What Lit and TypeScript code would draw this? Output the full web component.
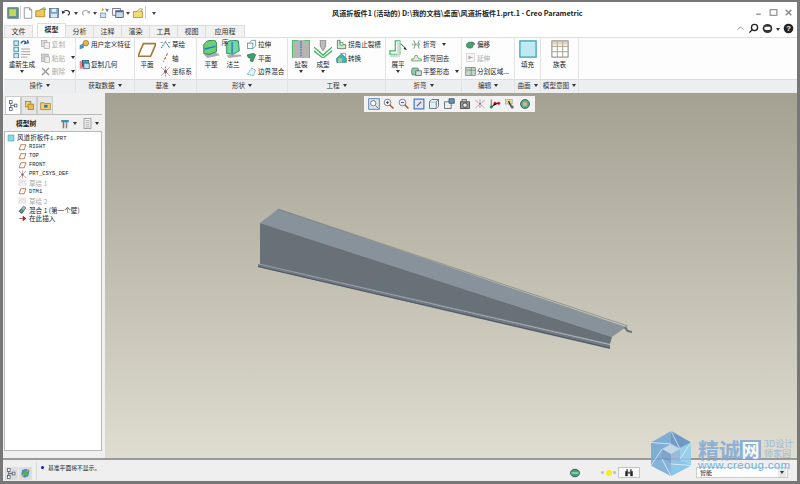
import { LitElement, css, html, svg } from 'lit';
import { customElement } from 'lit/decorators.js';

// small icon set, all drawn on a 16x16 box
const ic = (body: unknown, size = 14) =>
    html`<svg width="${size}" height="${size}" viewBox="0 0 16 16">${body}</svg>`;

const icons: Record<string, unknown> = {
    app: svg`<rect x="1" y="1" width="14" height="14" fill="#5f9a86" stroke="#4d6d80"/><rect x="3" y="3" width="9" height="9" fill="#c9d65a"/>`,
    page: svg`<path d="M3 1h7l3 3v11H3z" fill="#fff" stroke="#777"/><path d="M10 1v3h3" fill="none" stroke="#777"/>`,
    open: svg`<path d="M1 5h5l1-2h6v10H1z" fill="#eec75c" stroke="#9a7a25"/><path d="M9 2l4-1 1 3" fill="none" stroke="#4a8a3a"/>`,
    save: svg`<rect x="2" y="2" width="12" height="12" fill="#7da3c6" stroke="#456a8c"/><rect x="5" y="2.500" width="6" height="4" fill="#e8eef4"/><rect x="4" y="9" width="8" height="5" fill="#dfe6ec"/>`,
    undo: svg`<path d="M3 8a5 4 0 0 1 9-1 4 4 0 0 1-2 5" fill="none" stroke="#333" stroke-width="1.600"/><path d="M1 5l1 5 4-2z" fill="#333"/>`,
    redo: svg`<path d="M13 8a5 4 0 0 0-9-1 4 4 0 0 0 2 5" fill="none" stroke="#aaa" stroke-width="1.600"/><path d="M15 5l-1 5-4-2z" fill="#aaa"/>`,
    regen: svg`<rect x="2" y="8" width="7" height="6" fill="#cfe2ee" stroke="#6f8fa5"/><path d="M8 2l5 1-2 4z" fill="#3d7fc2"/><path d="M5 1l2 3-4 2z" fill="#e0a030"/>`,
    win: svg`<rect x="1" y="2" width="10" height="9" fill="#fff" stroke="#556"/><rect x="5" y="5" width="10" height="9" fill="#cbd9e8" stroke="#446"/><rect x="5" y="5" width="10" height="2" fill="#3c6ea5"/>`,
    closeWin: svg`<path d="M2 6h12v8H2z" fill="#f0dc70" stroke="#a08a30"/><path d="M6 6l5-4 3 1-3 3" fill="#f8f0b0" stroke="#a08a30"/>`,
    copy: svg`<rect x="2" y="2" width="8" height="9" fill="#ddd" stroke="#aaa"/><rect x="6" y="5" width="8" height="9" fill="#eee" stroke="#aaa"/>`,
    paste: svg`<rect x="2" y="3" width="10" height="11" fill="#ccc" stroke="#aaa"/><rect x="7" y="7" width="7" height="8" fill="#eee" stroke="#aaa"/>`,
    del: svg`<path d="M3 3l10 10M13 3L3 13" stroke="#999" stroke-width="2"/>`,
    udf: svg`<circle cx="10" cy="6" r="4" fill="#e8b93c" stroke="#8a6a20"/><path d="M1 9l6-3v7l-6 2z" fill="#4a90c8"/>`,
    geom: svg`<rect x="1" y="3" width="6" height="11" fill="#e44" opacity=".7"/><rect x="5" y="2" width="9" height="8" fill="#35a7c9" stroke="#246"/><path d="M7 6h8v8H7z" fill="#bfe3ee" stroke="#246"/>`,
    sketch: svg`<path d="M2 13L8 4l6 9" fill="none" stroke="#3a6ea8" stroke-width="1.500" stroke-dasharray="2 1"/><path d="M1 5h3M12 5h3" stroke="#555"/>`,
    axis: svg`<path d="M11 2L5 14" stroke="#9a5a28" stroke-width="1.500" stroke-dasharray="4 2"/>`,
    csys: svg`<path d="M2 2l12 12M14 2L2 14M8 1v14" stroke="#a55" stroke-width="1.200" stroke-dasharray="2 1"/><circle cx="8" cy="8" r="2" fill="#555"/>`,
    extrude: svg`<rect x="2" y="6" width="8" height="8" fill="#fff" stroke="#3a7fa8"/><path d="M5 6l3-4h6v8l-4 4" fill="none" stroke="#3a7fa8"/>`,
    flat: svg`<path d="M2 4l9-2 3 2-2 5-2 5-4-1 1-4-4-1z" fill="#3fa06a" stroke="#1f6a45"/>`,
    blend: svg`<path d="M2 12l6-9 6 3-3 8z" fill="#dff1f6" stroke="#3a8fb0" stroke-dasharray="2 1"/>`,
    corner: svg`<path d="M2 2h4v6h8v6H2z" fill="#cfe8c8" stroke="#555"/><rect x="6" y="5" width="4" height="4" fill="#fff" stroke="#3a9a4a"/>`,
    convert: svg`<path d="M1 9l7-6 7 6v6H1z" fill="#46b0b8" stroke="#276"/><path d="M6 2h8v6" fill="none" stroke="#a5a"/><rect x="3" y="9" width="6" height="6" fill="#8ed0a0"/>`,
    bend: svg`<path d="M2 8h12" stroke="#3a9a4a" stroke-width="3" stroke-dasharray="1 1"/><path d="M4 2l2 5M12 2l-2 5M4 14l2-5M12 14l-2-5" stroke="#555"/>`,
    unbend: svg`<path d="M1 13h14v-3h-4L9 5H6l-2 5H1z" fill="#e0f0dc" stroke="#4a8a50"/>`,
    state: svg`<rect x="1" y="3" width="10" height="10" rx="2" fill="#8fcca8" stroke="#3a7a5a"/><rect x="7" y="7" width="8" height="7" fill="#cdd" stroke="#555"/>`,
    offset: svg`<path d="M2 9c0-5 11-6 12-2 0 2-2 2-3 2v3c-3 2-9 2-9-3z" fill="#4fa070" stroke="#2a6a4a"/>`,
    extend: svg`<rect x="2" y="2" width="12" height="12" fill="#f4f4f4" stroke="#ccc"/><path d="M7 8h4" stroke="#888"/><rect x="5" y="6" width="3" height="4" fill="#aaa"/>`,
    split: svg`<rect x="1" y="2" width="14" height="12" fill="#cfcfcf" stroke="#3a9a4a"/><path d="M1 6h14M9 2v12" stroke="#3a9a4a"/>`,
    tree: svg`<rect x="2" y="1" width="4" height="4" fill="#fff" stroke="#345"/><rect x="9" y="6" width="4" height="4" fill="#fff" stroke="#345"/><rect x="2" y="11" width="4" height="4" fill="#fff" stroke="#345"/><path d="M4 5v6M4 8h5" stroke="#345"/>`,
    layers: svg`<rect x="2" y="2" width="8" height="8" fill="#f0d268" stroke="#8a7530"/><rect x="6" y="6" width="8" height="8" fill="#e8be4c" stroke="#8a7530"/>`,
    folder: svg`<path d="M1 4h5l1 1h8v9H1z" fill="#f3d264" stroke="#8a7530"/><rect x="6" y="7" width="5" height="4" fill="#3a72b5"/>`,
    tools: svg`<path d="M3 4h10v3H3z" fill="#3a8fb5"/><rect x="5" y="6" width="2" height="9" fill="#b5643a"/><rect x="9" y="6" width="2" height="9" fill="#7a8a9a"/>`,
    list: svg`<rect x="3" y="1" width="10" height="14" fill="#fff" stroke="#777"/><path d="M5 4h6M5 7h6M5 10h6M5 13h6" stroke="#777"/>`,
    part: svg`<rect x="2" y="2" width="12" height="12" fill="#7fdfe0" stroke="#3a8a9a"/>`,
    datum: svg`<path d="M5 3h9l-3 9H2z" fill="#fff" stroke="#a5562a" stroke-width="1.300"/>`,
    sketchGrey: svg`<path d="M2 13c0-10 12-10 12 0" fill="none" stroke="#bbb"/><rect x="1" y="2" width="14" height="12" fill="#ddd" opacity=".5"/>`,
    blendFeat: svg`<path d="M2 11L10 2l4 3-7 10z" fill="#8fc7a8" stroke="#346"/><circle cx="6" cy="11" r="3" fill="#6aa5d0" stroke="#234"/>`,
    insert: svg`<path d="M2 8h7V4l5 4-5 4V8" fill="#e01010" stroke="#900"/>`,
    model: svg`<path d="M3 3l6-2 5 3-2 8-6 2-4-4z" fill="#3f8fc0"/><path d="M3 12L13 2" stroke="#e8a030" stroke-width="2"/><circle cx="8" cy="8" r="3" fill="#5ab04a"/>`,
    sync: svg`<ellipse cx="8" cy="8" rx="6" ry="5" fill="#3fa86a" stroke="#236"/><path d="M3 8h10" stroke="#fff"/>`,
    search: svg`<circle cx="9.500" cy="6.500" r="4.500" fill="none" stroke="#222" stroke-width="2"/><path d="M6 10l-4 4" stroke="#222" stroke-width="2"/>`,
    chat: svg`<ellipse cx="8" cy="8" rx="7" ry="6.500" fill="#333"/><rect x="3.500" y="5.500" width="9" height="4.500" rx="2" fill="#fff"/>`,
    help: svg`<circle cx="8" cy="8" r="7" fill="#222"/><text x="8" y="12" font-size="11" font-weight="700" text-anchor="middle" fill="#fff" font-family="Liberation Sans">?</text>`,
    fit: svg`<rect x="1" y="1" width="14" height="14" fill="#dbe6f2" stroke="#35689a"/><circle cx="7" cy="7" r="3.500" fill="#fff" stroke="#555"/><path d="M10 10l4 4" stroke="#853"/>`,
    zin: svg`<circle cx="6" cy="6" r="4.500" fill="#eef" stroke="#666"/><path d="M4 6h4M6 4v4" stroke="#333"/><path d="M9 9l5 5" stroke="#a55a20" stroke-width="2"/>`,
    zout: svg`<circle cx="6" cy="6" r="4.500" fill="#eef" stroke="#666"/><path d="M4 6h4" stroke="#333"/><path d="M9 9l5 5" stroke="#a55a20" stroke-width="2"/>`,
    repaint: svg`<rect x="1.500" y="1.500" width="13" height="13" fill="#e2e6f6" stroke="#3f6fb0" stroke-width="1.500"/><path d="M5 11l6-6" stroke="#667" stroke-width="1.500"/>`,
    cube: svg`<path d="M2 5h9v9H2z" fill="#dff3f6" stroke="#456"/><path d="M2 5l3-3h9l-3 3M11 14l3-3V2" fill="#f5f5f5" stroke="#456"/>`,
    cubeView: svg`<path d="M2 5h9v9H2z" fill="#eee" stroke="#456"/><path d="M8 1h7v6H8z" fill="#5f9ab5" stroke="#345"/>`,
    camera: svg`<rect x="2" y="5" width="12" height="9" fill="#999" stroke="#333"/><circle cx="8" cy="9.500" r="3" fill="#eee" stroke="#222"/><rect x="4" y="2" width="6" height="3" fill="#ccc" stroke="#555"/>`,
    dplane: svg`<path d="M2 3l12 10M14 3L2 13" stroke="#a44" stroke-dasharray="2 1"/><path d="M8 2v12" stroke="#667" stroke-dasharray="2 1"/>`,
    dpoint: svg`<circle cx="3" cy="12" r="2" fill="#2a9a4a"/><circle cx="8" cy="7" r="2" fill="#e02020"/><circle cx="13" cy="7" r="2" fill="#e02020"/><path d="M3 12V2M3 12l5-5h5" stroke="#346"/>`,
    dcsys: svg`<rect x="2" y="2" width="9" height="6" fill="#e8e090" stroke="#aa9"/><path d="M6 4l4 8" stroke="#334" stroke-width="2"/><circle cx="11" cy="12" r="2" fill="#667"/>`,
    spin: svg`<circle cx="8" cy="8" r="6" fill="#5cab7a" stroke="#345"/><circle cx="8" cy="8" r="3" fill="#c9b0a5"/>`,
    binoc: svg`<rect x="2" y="5" width="4" height="8" fill="#222"/><rect x="10" y="5" width="4" height="8" fill="#222"/><rect x="6" y="6" width="4" height="3" fill="#555"/><rect x="4" y="2" width="2" height="3" fill="#222"/><rect x="10" y="2" width="2" height="3" fill="#222"/>`,
};

// big ribbon pictures, 20 wide
const bigIcons: Record<string, unknown> = {
    regen: svg`<rect x="1" y="1" width="5" height="5" fill="#cdeaf2" stroke="#3a8fa8"/><rect x="1" y="8" width="5" height="5" fill="#cdeaf2" stroke="#3a8fa8"/><rect x="1" y="15" width="5" height="5" fill="#cdeaf2" stroke="#3a8fa8"/><path d="M9 10h10M9 13h10M9 16h10M9 19h7" stroke="#999"/><path d="M9 4a3 3 0 0 1 5-2l-1 2 4-1-1-3" fill="none" stroke="#2563b5" stroke-width="1.500"/>`,
    plane: svg`<path d="M6 4h14l-6 14H0z" fill="#fff" stroke="#a5763a" stroke-width="1.800"/>`,
    flat: svg`<path d="M2 16l14-2 4 3-14 3z" fill="#aab"/><path d="M2 15V5l4-4 8-1 2 3v10l-8 3z" fill="#6ad07a" stroke="#2a7a45"/><path d="M3 10l12-3" stroke="#2a78c0" stroke-width="1.500"/>`,
    flange: svg`<path d="M3 17l15-1 2 2-15 2z" fill="#aab"/><path d="M3 15V3l5-3 8 1 1 11-7 4z" fill="#72d8a0" stroke="#2a7a55"/><path d="M9 2v13" stroke="#2a78c0" stroke-width="1.500"/>`,
    rip: svg`<rect x="0" y="0" width="20" height="20" fill="#b5b5b2"/><path d="M0 0h6M14 0h6M0 0v20M20 0v20" stroke="#3fc46a" stroke-width="2"/><path d="M10 1v18" stroke="#2a68c8" stroke-width="1.200" stroke-dasharray="2 1"/>`,
    form: svg`<path d="M7 0h6v7l-3 5-3-5z" fill="#bbb" stroke="#888"/><path d="M0 8l6 5 4 4 4-4 6-5M0 12l6 5 4 3 4-3 6-5" fill="none" stroke="#3fb860" stroke-width="1.500"/>`,
    unfold: svg`<path d="M1 12h6V1h5v15H1z" fill="#fff" stroke="#3fb860" stroke-width="1.400"/><path d="M1 16h11v3H1zM9 1h3v15H9z" fill="#cdd"/><path d="M13 4l5 5" stroke="#333"/><path d="M20 11l-4-1 2-2z" fill="#222"/>`,
    fill: svg`<rect x="1" y="1" width="18" height="18" fill="#bfeaf2" stroke="#3aa0b5" stroke-width="1.400"/>`,
    family: svg`<rect x="1" y="1" width="18" height="18" fill="#fff" stroke="#777"/><path d="M1 7h18M1 13h18M7 1v18M13 1v18" stroke="#a59a80"/><rect x="1" y="1" width="18" height="4" fill="#cbb890" opacity=".6"/>`,
};

const bigBtn = (pic: string, label: string, caret = false, cls = '') => html`
    <div class="big ${cls}">
        <svg width="18" height="18" viewBox="0 0 20 20">${bigIcons[pic]}</svg>
        <span class="bl">${label}</span>
        ${caret ? html`<span class="car"></span>` : ''}
    </div>`;

const small = (icon: string, label: string, caret = false, grey = false) => html`
    <div class="sm ${grey ? 'grey' : ''}">
        ${ic(icons[icon], 11)}<span>${label}</span>${caret ? html`<span class="car side"></span>` : ''}
    </div>`;

const treeRows: [string, string, string][] = [
    ['datum', 'RIGHT', 'mono'],
    ['datum', 'TOP', 'mono'],
    ['datum', 'FRONT', 'mono'],
    ['csys', 'PRT_CSYS_DEF', 'mono'],
    ['sketchGrey', '草绘 1', 'dim'],
    ['datum', 'DTM1', 'mono'],
    ['sketchGrey', '草绘 2', 'dim'],
    ['blendFeat', '混合 1 (第一个壁)', ''],
    ['insert', '在此插入', ''],
];
const viewTools = ['fit', 'zin', 'zout', 'repaint', 'cube', 'cubeView', 'camera', 'dplane', 'dpoint', 'dcsys', 'spin'];
const tabs = ['分析', '注释', '渲染', '工具', '视图', '应用程序'];

@customElement('app-root')
export class AppRoot extends LitElement {
    static styles = css`
        :host {
            display: block;
            width: 800px;
            height: 484px;
            overflow: hidden;
            font-family: "Noto Sans CJK SC", "Liberation Sans", sans-serif;
            font-size: 6.600px;
            color: #222;
        }
        .win {
            position: relative;
            box-sizing: border-box;
            width: 800px;
            height: 484px;
            border: 3px solid #777;
            border-top-width: 2px;
            background: #f0f0f0;
            display: flex;
            flex-direction: column;
        }
        svg { display: block; flex: none; }

        /* title row */
        .top { height: 21px; background: #fff; display: flex; align-items: center; flex: none; }
        .qa { width: 329px; display: flex; align-items: center; gap: 1px; padding-left: 4px; box-sizing: border-box; flex: none; }
        .qa .sep { width: 1px; height: 13px; background: #ccc; }
        .qa .tiny { width: 0; height: 0; border: 2.500px solid transparent; border-top: 3px solid #444; margin: 3px 1px 0; }
        .qa .tiny.far { margin-left: 5px; }
        .title { flex: 1; font-size: 7.150px; font-weight: 700; white-space: nowrap; }
        .wctl { display: flex; gap: 6px; padding-right: 4px; }

        /* tabs */
        .tabs { height: 14px; background: #fff; display: flex; align-items: flex-end; flex: none; padding-left: 2px; position: relative; }
        .tab { height: 11px; line-height: 11px; padding: 0 5.500px; background: #f1f1f1; border: 1px solid #ddd; border-bottom: none; margin-left: -1px; text-align: center; font-size: 7px; color: #333; width: 16px; }
        .tab.file { margin-right: 5px; }
        .tab.on { background: #fff; height: 13px; font-weight: 700; }
        .tab.long { width: 27px; }
        .help { margin-left: auto; display: flex; align-items: center; gap: 3px; padding: 0 3px 0 0; align-self: flex-start; }
        .help .mini { width: 0; height: 0; border: 2.500px solid transparent; border-top: 3px solid #333; margin-top: 3px; }

        /* ribbon */
        .ribbon { height: 55px; background: #fdfdfd; border-top: 1px solid #ddd; display: flex; flex: none; padding-left: 1px; }
        .grp { display: flex; flex-direction: column; border-right: 1px solid #e2e2e2; box-sizing: border-box; flex: none; }
        .grp.rest { flex: 1; border-right: none; }
        .g-op { width: 72px; }
        .g-get { width: 59px; }
        .g-dat { width: 62px; }
        .g-shp { width: 91px; }
        .g-eng { width: 98px; }
        .g-bnd { width: 76px; }
        .g-edt { width: 53px; }
        .g-srf { width: 26px; }
        .g-int { width: 38px; }
        .items { flex: 1; display: flex; }
        .g-op .items { padding-left: 3px; gap: 3px; }
        .g-get .items { padding-left: 3px; }
        .g-dat .items { gap: 1px; }
        .g-shp .items { padding-left: 3px; }
        .g-shp .col { margin-left: 2px; }
        .g-eng .items { padding-left: 2px; }
        .g-eng .col { margin-left: 2px; }
        .g-bnd .items { padding-left: 1px; }
        .g-bnd .col { margin-left: 2px; }
        .g-edt .items { padding-left: 3px; }
        .g-srf .items, .g-int .items { justify-content: center; }
        .glabel { height: 13px; line-height: 10px; background: #eceef0; border-top: 1px solid #ddd; text-align: center; font-size: 6.600px; color: #333; white-space: nowrap; }
        .glabel::after { content: ''; display: inline-block; border: 2px solid transparent; border-top: 3px solid #333; margin-left: 3px; vertical-align: -1px; }
        .rest .glabel::after { display: none; }
        .big { width: 22px; display: flex; flex-direction: column; align-items: center; padding-top: 2px; }
        .big.w30 { width: 30px; }
        .big.w24 { width: 24px; }
        .bl { font-size: 6.600px; line-height: 9px; margin-top: 2px; white-space: nowrap; }
        .car { display: inline-block; width: 0; height: 0; border: 2px solid transparent; border-top: 3px solid #333; margin-top: 1px; }
        .car.side { margin: 2px 0 0 5px; }
        .col { display: flex; flex-direction: column; gap: 1.500px; }
        .col.wide { gap: 8px; }
        .sm { height: 12px; display: flex; align-items: center; gap: 1px; white-space: nowrap; }
        .sm.grey { color: #aaa; }

        .main { flex: 1; display: flex; min-height: 0; }

        /* model tree */
        .side-panel { width: 102px; flex: none; display: flex; flex-direction: column; background: #f0f0f0; padding: 3px 3px 7px 1px; box-sizing: border-box; }
        .ptabs { display: flex; height: 18px; padding-left: 1px; border-bottom: 1px solid #bbb; }
        .ptab { width: 16px; box-sizing: border-box; display: flex; align-items: center; justify-content: center; border: 1px solid #ccc; border-bottom: none; background: #e6e6e6; }
        .ptab.on { background: #fff; }
        .phead { display: flex; align-items: center; height: 16px; padding: 0 2px 0 12px; font-weight: 700; font-size: 6.800px; gap: 2px; }
        .phead .sp { flex: 1; }
        .phead .mini { width: 0; height: 0; border: 2px solid transparent; border-top: 3px solid #333; margin: 2px 1px 0 0; }
        .phead .mini.gap { margin-right: 3px; }
        .tree { flex: 1; background: #fff; border: 1px solid #b9b9b9; padding: 2px 0 0 2px; }
        .row { height: 8.900px; line-height: 8px; display: flex; align-items: center; gap: 2px; white-space: nowrap; font-size: 6.600px; }
        .row.child { padding-left: 11px; }
        .mono { font-family: "Liberation Mono", monospace; font-size: 5.500px; }
        .dim { color: #aaa; }

        /* graphics area */
        .view { flex: 1; position: relative; background: linear-gradient(#a4a092, #dfddd0); overflow: hidden; }
        .vt { position: absolute; left: 259px; top: 3px; height: 16px; padding: 0 3.500px; display: flex; align-items: center; gap: 3.200px; background: #f2f2f2; }
        .model { position: absolute; left: 0; top: 0; }

        /* status */
        .status { height: 23px; flex: none; background: #efefef; border-top: 2px solid #9a9a9a; display: flex; align-items: center; box-sizing: border-box; padding-left: 2px; }
        .status .lefts { display: flex; gap: 1px; padding-top: 5px; }
        .status .btn { width: 13px; height: 13px; background: #ddd; display: flex; align-items: center; justify-content: center; }
        .status .vs { width: 1px; height: 18px; background: #d8d8d8; margin: 0 4px; }
        .msg { flex: 1; font-size: 5.800px; padding-bottom: 6px; display: flex; align-items: center; gap: 4px; }
        .dot { width: 3px; height: 3px; border-radius: 50%; background: #1010e0; }
        .rt { display: flex; align-items: center; padding-top: 4px; }
        .lamp { display: flex; gap: 1.500px; align-items: center; margin: 0 2px 0 20px; }
        .lamp i { width: 3px; height: 3px; border-radius: 50%; background: #bbb; }
        .lamp i.y { width: 6px; height: 6px; background: #f5ee20; }
        .find { width: 22px; height: 11px; box-sizing: border-box; border: 1px solid #c4c4c4; background: #f8f8f8; display: flex; align-items: center; justify-content: center; margin-right: 56px; }
        .sel { width: 92px; height: 11px; box-sizing: border-box; border: 1px solid #ccc; background: #fff; font-size: 6px; line-height: 9px; padding-left: 3px; position: relative; margin-right: 9px; }
        .sel::after { content: ''; position: absolute; right: 1px; top: 0; width: 8px; height: 9px; background: #e8e8e8; }
        .sel::before { content: ''; position: absolute; right: 3px; top: 3px; z-index: 1; border: 2px solid transparent; border-top: 3px solid #333; }

        /* site watermark lying over the window */
        .mark { position: absolute; left: 647px; top: 428px; display: flex; gap: 6px; opacity: 0.85; pointer-events: none; }
        .mtext { display: flex; flex-direction: column; padding-top: 8px; }
        .mtop { display: flex; align-items: center; height: 22px; }
        .mbig { font-size: 21px; font-weight: 700; color: #7fa9d6; line-height: 22px; white-space: nowrap; }
        .mnet { background: #7fa9d6; color: #fff; font-size: 18px; font-weight: 700; line-height: 19px; padding: 0 1.500px; margin-right: 3px; }
        .msub { font-size: 9px; line-height: 10px; color: #8fb4da; white-space: nowrap; }
        .murl { font-family: "Liberation Sans", sans-serif; font-size: 11.500px; line-height: 11px; color: #5aa9de; letter-spacing: 0.350px; white-space: nowrap; }
    `;

    render() {
        return html`<div class="win">
            <div class="top">
                <div class="qa">
                    ${ic(icons.app, 12)}<span class="sep"></span>
                    ${ic(icons.page, 12)}${ic(icons.open, 12)}${ic(icons.save, 12)}
                    ${ic(icons.undo, 11)}<span class="tiny"></span>
                    ${ic(icons.redo, 11)}<span class="tiny"></span>
                    ${ic(icons.regen, 12)}${ic(icons.win, 12)}<span class="tiny"></span>
                    ${ic(icons.closeWin, 12)}<span class="sep"></span><span class="tiny far"></span>
                </div>
                <div class="title">风道折板件1 (活动的) D:\\我的文档\\桌面\\风道折板件1.prt.1 - Creo Parametric</div>
                <div class="wctl">
                    ${ic(svg`<path d="M4 11h8" stroke="#777" stroke-width="2"/>`, 9)}
                    ${ic(svg`<rect x="2" y="3" width="12" height="10" fill="none" stroke="#888" stroke-width="2"/>`, 9)}
                    ${ic(svg`<path d="M3 3l10 10M13 3L3 13" stroke="#888" stroke-width="2.500"/>`, 9)}
                </div>
            </div>
            <div class="tabs">
                <div class="tab file">文件</div>
                <div class="tab on">模型</div>
                ${tabs.map(t => html`<div class="tab ${t.length > 2 ? 'long' : ''}">${t}</div>`)}
                <div class="help">
                    ${ic(svg`<path d="M3 10l5-5 5 5" fill="none" stroke="#888" stroke-width="1.500"/>`, 9)}
                    ${ic(icons.search, 11)}
                    ${ic(icons.chat, 11)}<span class="mini"></span>
                    ${ic(icons.help, 11)}
                </div>
            </div>
            <div class="ribbon">
                <div class="grp g-op">
                    <div class="items">
                        ${bigBtn('regen', '重新生成', true, 'w30')}
                        <div class="col">${small('copy', '复制', false, true)}${small('paste', '粘贴', true, true)}${small('del', '删除', true, true)}</div>
                    </div>
                    <div class="glabel">操作</div>
                </div>
                <div class="grp g-get">
                    <div class="items"><div class="col wide">${small('udf', '用户定义特征')}${small('geom', '复制几何')}</div></div>
                    <div class="glabel">获取数据</div>
                </div>
                <div class="grp g-dat">
                    <div class="items">
                        ${bigBtn('plane', '平面', false, 'w24')}
                        <div class="col">${small('sketch', '草绘')}${small('axis', '轴')}${small('csys', '坐标系')}</div>
                    </div>
                    <div class="glabel">基准</div>
                </div>
                <div class="grp g-shp">
                    <div class="items">
                        ${bigBtn('flat', '平整')}${bigBtn('flange', '法兰')}
                        <div class="col">${small('extrude', '拉伸')}${small('flat', '平面')}${small('blend', '边界混合')}</div>
                    </div>
                    <div class="glabel">形状</div>
                </div>
                <div class="grp g-eng">
                    <div class="items">
                        ${bigBtn('rip', '扯裂', true)}${bigBtn('form', '成型', true)}
                        <div class="col">${small('corner', '拐角止裂槽')}${small('convert', '转换')}</div>
                    </div>
                    <div class="glabel">工程</div>
                </div>
                <div class="grp g-bnd">
                    <div class="items">
                        ${bigBtn('unfold', '展平', true)}
                        <div class="col">${small('bend', '折弯', true)}${small('unbend', '折弯回去')}${small('state', '平整形态', true)}</div>
                    </div>
                    <div class="glabel">折弯</div>
                </div>
                <div class="grp g-edt">
                    <div class="items">
                        <div class="col">${small('offset', '偏移')}${small('extend', '延伸', false, true)}${small('split', '分割区域...')}</div>
                    </div>
                    <div class="glabel">编辑</div>
                </div>
                <div class="grp g-srf">
                    <div class="items">${bigBtn('fill', '填充')}</div>
                    <div class="glabel">曲面</div>
                </div>
                <div class="grp g-int">
                    <div class="items">${bigBtn('family', '族表')}</div>
                    <div class="glabel">模型意图</div>
                </div>
                <div class="grp rest">
                    <div class="items"></div>
                    <div class="glabel"></div>
                </div>
            </div>
            <div class="main">
                <div class="side-panel">
                    <div class="ptabs">
                        <div class="ptab on">${ic(icons.tree, 11)}</div>
                        <div class="ptab">${ic(icons.layers, 11)}</div>
                        <div class="ptab">${ic(icons.folder, 11)}</div>
                    </div>
                    <div class="phead">
                        <span>模型树</span><span class="sp"></span>
                        ${ic(icons.tools, 12)}<span class="mini gap"></span>
                        ${ic(icons.list, 11)}<span class="mini"></span>
                    </div>
                    <div class="tree">
                        <div class="row">${ic(icons.part, 8)}<span>风道折板件<span class="mono">1.PRT</span></span></div>
                        ${treeRows.map(([i, t, c]) => html`<div class="row child">${ic(icons[i], 9)}<span class="${c}">${t}</span></div>`)}
                    </div>
                </div>
                <div class="view">
                    <svg class="model" width="692" height="365" viewBox="105 93 692 365">
                        <path d="M278 209L260 223 612 337 619 332 626 327z" fill="#88929b"/>
                        <path d="M260 223V264L610 344 612 337z" fill="#687078"/>
                        <path d="M258 264L610 345V349L258 267z" fill="#6f7a86"/>
                        <path d="M258 266.500L610 348" stroke="#4e5762" stroke-width="1"/>
                        <path d="M260 264L610 344" stroke="#8a95a0" stroke-width=".6"/>
                        <path d="M626 326l2 4 4 1v2l-5-1-3-4z" fill="#6a747e"/>
                        <path d="M278 209L628 326" stroke="#5f666c" stroke-width=".5"/>
                    </svg>
                    <div class="vt">${viewTools.map(t => ic(icons[t], 12))}</div>
                </div>
            </div>
            <div class="status">
                <div class="lefts">
                    <div class="btn">${ic(icons.tree, 11)}</div>
                    <div class="btn">${ic(icons.model, 11)}</div>
                </div>
                <span class="vs"></span>
                <div class="msg"><span class="dot"></span><span>基准平面将不显示。</span></div>
                <div class="rt">
                    ${ic(icons.sync, 12)}
                    <div class="lamp"><i></i><i class="y"></i><i></i></div>
                    <div class="find">${ic(icons.binoc, 10)}</div>
                    <div class="sel">智能</div>
                </div>
            </div>
            <div class="mark">
                <svg width="42" height="47" viewBox="0 0 42 47">
                    <path d="M21 1L41 12.500V35.500L21 46 1 35.500V12.500z" fill="#6fa6d6"/>
                    <path d="M21 1L41 12.500 30 18 21 13z" fill="#5d8fc4"/>
                    <path d="M41 12.500V35.500L30 30V18z" fill="#8ccdf0"/>
                    <path d="M41 35.500L21 46V34l9-4z" fill="#79c2ea"/>
                    <path d="M21 46L1 35.500 12 30l9 4z" fill="#74a9d8"/>
                    <path d="M21 14l9 5v10l-9 5-9-5V19z" fill="#fff" opacity=".55"/>
                    <path d="M21 24l9-5v10l-9 5z" fill="#8fb6dc"/>
                    <path d="M21 24l-9-5v10l9 5z" fill="#6f9ccb"/>
                    <path d="M21 1L30 19M41 12.500L30 29M41 35.500L21 34M21 46L12 29M1 35.500L12 19M1 12.500L21 14" stroke="#e8eef4" stroke-width="1" fill="none" opacity=".8"/>
                </svg>
                <div class="mtext">
                    <div class="mtop">
                        <span class="mbig">精诚</span><span class="mnet">网</span>
                        <div class="msub">3D设计<br>师家园</div>
                    </div>
                    <div class="murl">www.creoug.com</div>
                </div>
            </div>
        </div>`;
    }
}
